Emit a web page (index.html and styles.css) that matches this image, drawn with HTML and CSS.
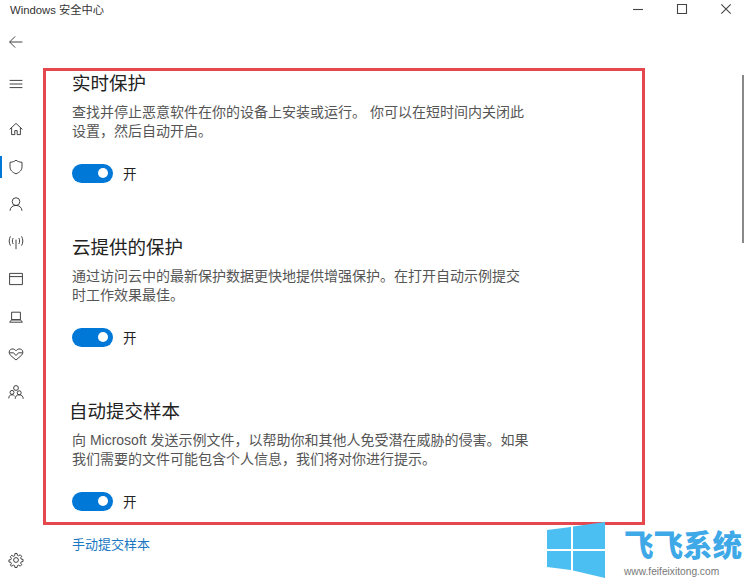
FILE: index.html
```html
<!DOCTYPE html>
<html lang="zh-CN">
<head>
  <meta charset="UTF-8">
  <title>Windows 安全中心</title>
  <link rel="stylesheet" href="styles.css">
</head>
<body>

  <header class="titlebar">
    <span class="app-title">Windows 安全中心</span>
    <div class="win-btns">
      <svg class="win-icon" viewBox="0 0 10 10"><path d="M0 5.500h10"/></svg>
      <svg class="win-icon" viewBox="0 0 10 10"><path d="M.5.500h9v9h-9z"/></svg>
      <svg class="win-icon" viewBox="0 0 10 10"><path d="M.3.300l9.400 9.400M9.700.300L.3 9.700"/></svg>
    </div>
  </header>

  <div class="layout">
    <nav class="sidebar">
      <svg class="nav-icon back" viewBox="0 0 20 20"><path d="M18 10H2M9 3l-7 7 7 7"/></svg>
      <svg class="nav-icon menu" viewBox="0 0 20 20"><path d="M2 5.500h16M2 10h16M2 14.500h16"/></svg>

      <svg class="nav-icon" viewBox="0 0 20 20"><path d="M2 10.500L10 3l8 7.500M4.500 8.500V17H8.500V12H11.500V17H15.500V8.500"/></svg>
      <div class="nav-active">
        <svg class="nav-icon" viewBox="0 0 20 20"><path d="M10 1.500c2.200 1.700 4.500 2.500 7.500 2.600V10c0 3.800-3 6.800-7.500 8.500C5.500 16.800 2.500 13.800 2.500 10V4.100C5.500 4 7.800 3.200 10 1.500z"/></svg>
      </div>
      <svg class="nav-icon" viewBox="0 0 20 20"><circle cx="10" cy="7" r="4.800"/><path d="M2.500 18.500c.5-4.500 3.300-6.700 7.500-6.700s7 2.200 7.500 6.700"/></svg>
      <svg class="nav-icon" viewBox="0 0 20 20"><path d="M10 7v12M6.500 5c-1.400 2.500-1.400 5 0 7.500M13.500 5c1.400 2.500 1.400 5 0 7.500M3 3c-2 3.800-2 7.700 0 11.500M17 3c2 3.800 2 7.700 0 11.500"/></svg>
      <svg class="nav-icon" viewBox="0 0 20 20"><path d="M2 3h16v14H2zM2 7h16"/></svg>
      <svg class="nav-icon" viewBox="0 0 20 20"><path d="M4.500 4h11v9.500h-11zM2 16.500h16l-2.500-3h-11z"/></svg>
      <svg class="nav-icon" viewBox="0 0 20 20"><path d="M10 6C8.500 3.500 5 3 3 4.500S1 9.500 3 11.500L10 17.500l7-6c2-2 2-5.500 0-7S11.500 3.500 10 6zM1.800 8.500H7L10 12l3-3.500h5.200"/></svg>
      <svg class="nav-icon" viewBox="0 0 20 20"><circle cx="10" cy="5" r="3"/><circle cx="5" cy="10.500" r="2.500"/><circle cx="14" cy="11" r="2.500"/><path d="M1 18c0-3 1.500-4.500 4-4.500 1.500 0 2.500.5 3.200 1.500M9 18.500c0-3.200 2-5 5-5s5 1.800 5 5"/></svg>

      <svg class="nav-icon settings" viewBox="0 0 20 20"><circle cx="10" cy="10" r="3"/><path d="M8.700 1.800h2.600l.4 2.300 1.600.7 2-1.300 1.800 1.800-1.300 2 .7 1.600 2.300.4v2.600l-2.300.4-.7 1.600 1.300 2-1.800 1.800-2-1.300-1.600.7-.4 2.300H8.700l-.4-2.300-1.600-.7-2 1.300L2.900 16.500l1.300-2-.7-1.600-2.300-.4V9.900l2.300-.4.7-1.600-1.300-2 1.800-1.800 2 1.300 1.600-.7z"/></svg>
    </nav>

    <main class="content">
      <section class="block">
        <h2>实时保护</h2>
        <p>查找并停止恶意软件在你的设备上安装或运行。 你可以在短时间内关闭此设置，然后自动开启。</p>
        <div class="toggle-row"><span class="toggle"></span><span class="toggle-label">开</span></div>
      </section>
      <section class="block">
        <h2>云提供的保护</h2>
        <p>通过访问云中的最新保护数据更快地提供增强保护。在打开自动示例提交时工作效果最佳。</p>
        <div class="toggle-row"><span class="toggle"></span><span class="toggle-label">开</span></div>
      </section>
      <section class="block last">
        <h2 class="shifted">自动提交样本</h2>
        <p>向 Microsoft 发送示例文件，以帮助你和其他人免受潜在威胁的侵害。如果我们需要的文件可能包含个人信息，我们将对你进行提示。</p>
        <div class="toggle-row"><span class="toggle"></span><span class="toggle-label">开</span></div>
      </section>
      <a class="manual-link" href="#">手动提交样本</a>
    </main>
  </div>

  <div class="scroll-thumb"></div>
  <div class="red-box"></div>

  <div class="watermark">
    <svg class="wm-logo" viewBox="0 0 58 56"><path d="M0 8l24-3v22H0zM26 4.500L58 0v27H26zM0 29h24v19L0 45zM26 29h32v27l-32-7.500z"/></svg>
    <div class="wm-text">
      <div class="wm-name">飞飞系统</div>
      <div class="wm-url">www.feifeixitong.com</div>
    </div>
  </div>

</body>
</html>
```

FILE: styles.css
```css
html, body { height: 100%; }
body {
  margin: 0;
  height: 578px;
  overflow: hidden;
  position: relative;
  background: #fff;
  color: #222;
  font-family: "Liberation Sans", "Noto Sans CJK SC", sans-serif;
  display: flex;
  flex-direction: column;
}

.titlebar {
  height: 18px;
  display: flex;
  align-items: center;
  justify-content: space-between;
  padding-left: 10px;
}
.app-title { font-size: 11.300px; color: #333; }
.win-btns { display: flex; gap: 34px; padding-right: 13px; }
.win-icon { width: 10px; height: 10px; fill: none; stroke: #444; stroke-width: 1.1; overflow: visible; }

.layout { flex: 1; display: flex; min-height: 0; }

.sidebar {
  width: 32px;
  display: flex;
  flex-direction: column;
  align-items: center;
  flex-shrink: 0;
  padding-top: 16px;
  padding-bottom: 10px;
}
.nav-icon {
  width: 16px;
  height: 16px;
  margin-bottom: 21.500px;
  fill: none;
  stroke: #333;
  stroke-width: 1.150;
  flex-shrink: 0;
}
.nav-icon.back { margin-bottom: 26px; }
.nav-icon.menu { margin-bottom: 29px; }
.nav-active { position: relative; height: 37.500px; width: 100%; display: flex; justify-content: center; }
.nav-active::before {
  content: "";
  position: absolute;
  left: 0;
  top: -3px;
  width: 2px;
  height: 22px;
  background: #0078d7;
}
.nav-icon.settings { margin-top: auto; margin-bottom: 0; }

.content { flex: 1; padding: 56px 0 0 40px; min-width: 0; }

.block { height: 164px; width: 458px; }
.block.last { height: 133px; }
h2 {
  margin: 0;
  font-size: 18.500px;
  font-weight: 400;
  line-height: 19px;
  color: #222;
}
h2.shifted { margin-left: -3px; }
p {
  margin: 10px 0 0;
  font-size: 14px;
  line-height: 19px;
  color: #555;
}
.toggle-row { display: flex; align-items: center; gap: 10px; margin-top: 22px; }
.toggle {
  position: relative;
  width: 41px;
  height: 19px;
  border-radius: 10px;
  background: #0078d7;
}
.toggle::after {
  content: "";
  position: absolute;
  right: 5px;
  top: 4.500px;
  width: 10px;
  height: 10px;
  border-radius: 50%;
  background: #fff;
}
.toggle-label { font-size: 13.500px; color: #222; }

.manual-link {
  display: block;
  font-size: 13px;
  line-height: 19px;
  color: #1a78c2;
  text-decoration: none;
}

.scroll-thumb {
  position: absolute;
  right: 0;
  top: 75px;
  width: 2px;
  height: 168px;
  background: #888;
}

.red-box {
  position: absolute;
  left: 43px;
  top: 68px;
  width: 596px;
  height: 451px;
  border: 3px solid #e4484e;
}

.watermark {
  position: absolute;
  left: 547px;
  top: 522px;
  display: flex;
  gap: 19px;
}
.wm-logo { width: 58px; height: 56px; fill: #4bbef2; flex-shrink: 0; }
.wm-text { padding-top: 9px; }
.wm-name {
  font-size: 29.500px;
  line-height: 30px;
  font-weight: 900;
  color: #3fa9e8;
  white-space: nowrap;
}
.wm-url { margin-top: 4px; font-size: 10.200px; line-height: 13px; color: #777; white-space: nowrap; }
```
